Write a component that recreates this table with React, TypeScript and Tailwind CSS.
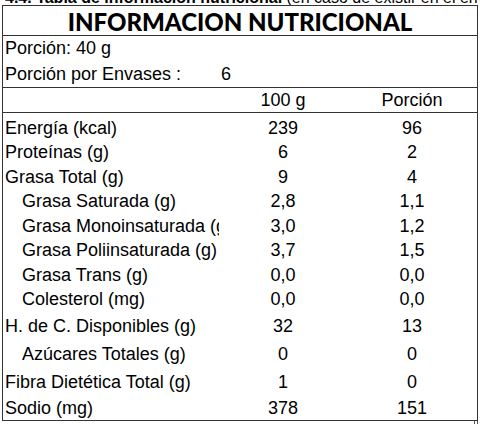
import React from 'react';

type Row = { label: string; g100: string; portion: string; indent?: boolean; h: string };

const rows: Row[] = [
  { label: 'Energía (kcal)', g100: '239', portion: '96', h: 'h-[24.5px]' },
  { label: 'Proteínas (g)', g100: '6', portion: '2', h: 'h-[24.5px]' },
  { label: 'Grasa Total (g)', g100: '9', portion: '4', h: 'h-[24.5px]' },
  { label: 'Grasa Saturada (g)', g100: '2,8', portion: '1,1', indent: true, h: 'h-[24.5px]' },
  { label: 'Grasa Monoinsaturada (g)', g100: '3,0', portion: '1,2', indent: true, h: 'h-[24.5px]' },
  { label: 'Grasa Poliinsaturada (g)', g100: '3,7', portion: '1,5', indent: true, h: 'h-[24.5px]' },
  { label: 'Grasa Trans (g)', g100: '0,0', portion: '0,0', indent: true, h: 'h-[24.5px]' },
  { label: 'Colesterol (mg)', g100: '0,0', portion: '0,0', indent: true, h: 'h-[24.5px]' },
  { label: 'H. de C. Disponibles (g)', g100: '32', portion: '13', h: 'h-[28px]' },
  { label: 'Azúcares Totales (g)', g100: '0', portion: '0', indent: true, h: 'h-[28px]' },
  { label: 'Fibra Dietética Total (g)', g100: '1', portion: '0', h: 'h-[28px]' },
  { label: 'Sodio (mg)', g100: '378', portion: '151', h: 'h-[24px]' },
];

const App = () => {
  return (
    <div className="h-[424px] w-[480px] overflow-hidden bg-white font-['Liberation_Sans',Arial,sans-serif] text-[18px] text-black">
      {/* heading of the page, cut off above */}
      <div className="h-[5px] overflow-hidden">
        <div className="-mt-[10px] whitespace-nowrap pl-[5px] text-[16px] leading-[16px]">
          <span className="font-bold">4.4. Tabla de información nutricional</span> (en caso de existir en el envase)
        </div>
      </div>

      <div className="ml-[2px] w-[476px] border border-[#333]">
        <div className="flex h-[30px] items-center justify-center border-b border-[#333] pt-[2px] font-['Lato',sans-serif] text-[24px] font-black leading-none">
          INFORMACION NUTRICIONAL
        </div>

        <div className="border-b border-[#333] pl-[2px]">
          <div className="h-[25.5px] leading-[25.5px]">Porción: 40 g</div>
          <div className="flex h-[25.5px] leading-[25.5px]">
            <span className="w-[216px]">Porción por Envases :</span>
            <span>6</span>
          </div>
        </div>

        <div className="flex h-[25px] border-b border-[#333] leading-[25px]">
          <div className="w-[216px]" />
          <div className="w-[128px] text-center">100 g</div>
          <div className="flex-1 text-center">Porción</div>
        </div>

        <div className="pt-[3px]">
          {rows.map((r) => (
            <div key={r.label} className={`flex ${r.h} items-center`}>
              <div className={`w-[216px] overflow-hidden whitespace-nowrap ${r.indent ? 'pl-[19px]' : 'pl-[2px]'}`}>
                {r.label}
              </div>
              <div className="w-[128px] text-center">{r.g100}</div>
              <div className="flex-1 text-center">{r.portion}</div>
            </div>
          ))}
        </div>
      </div>
      <div className="ml-[474px] h-[6px] w-[4px] border-x border-[#555]" />
    </div>
  );
};

export default App;
